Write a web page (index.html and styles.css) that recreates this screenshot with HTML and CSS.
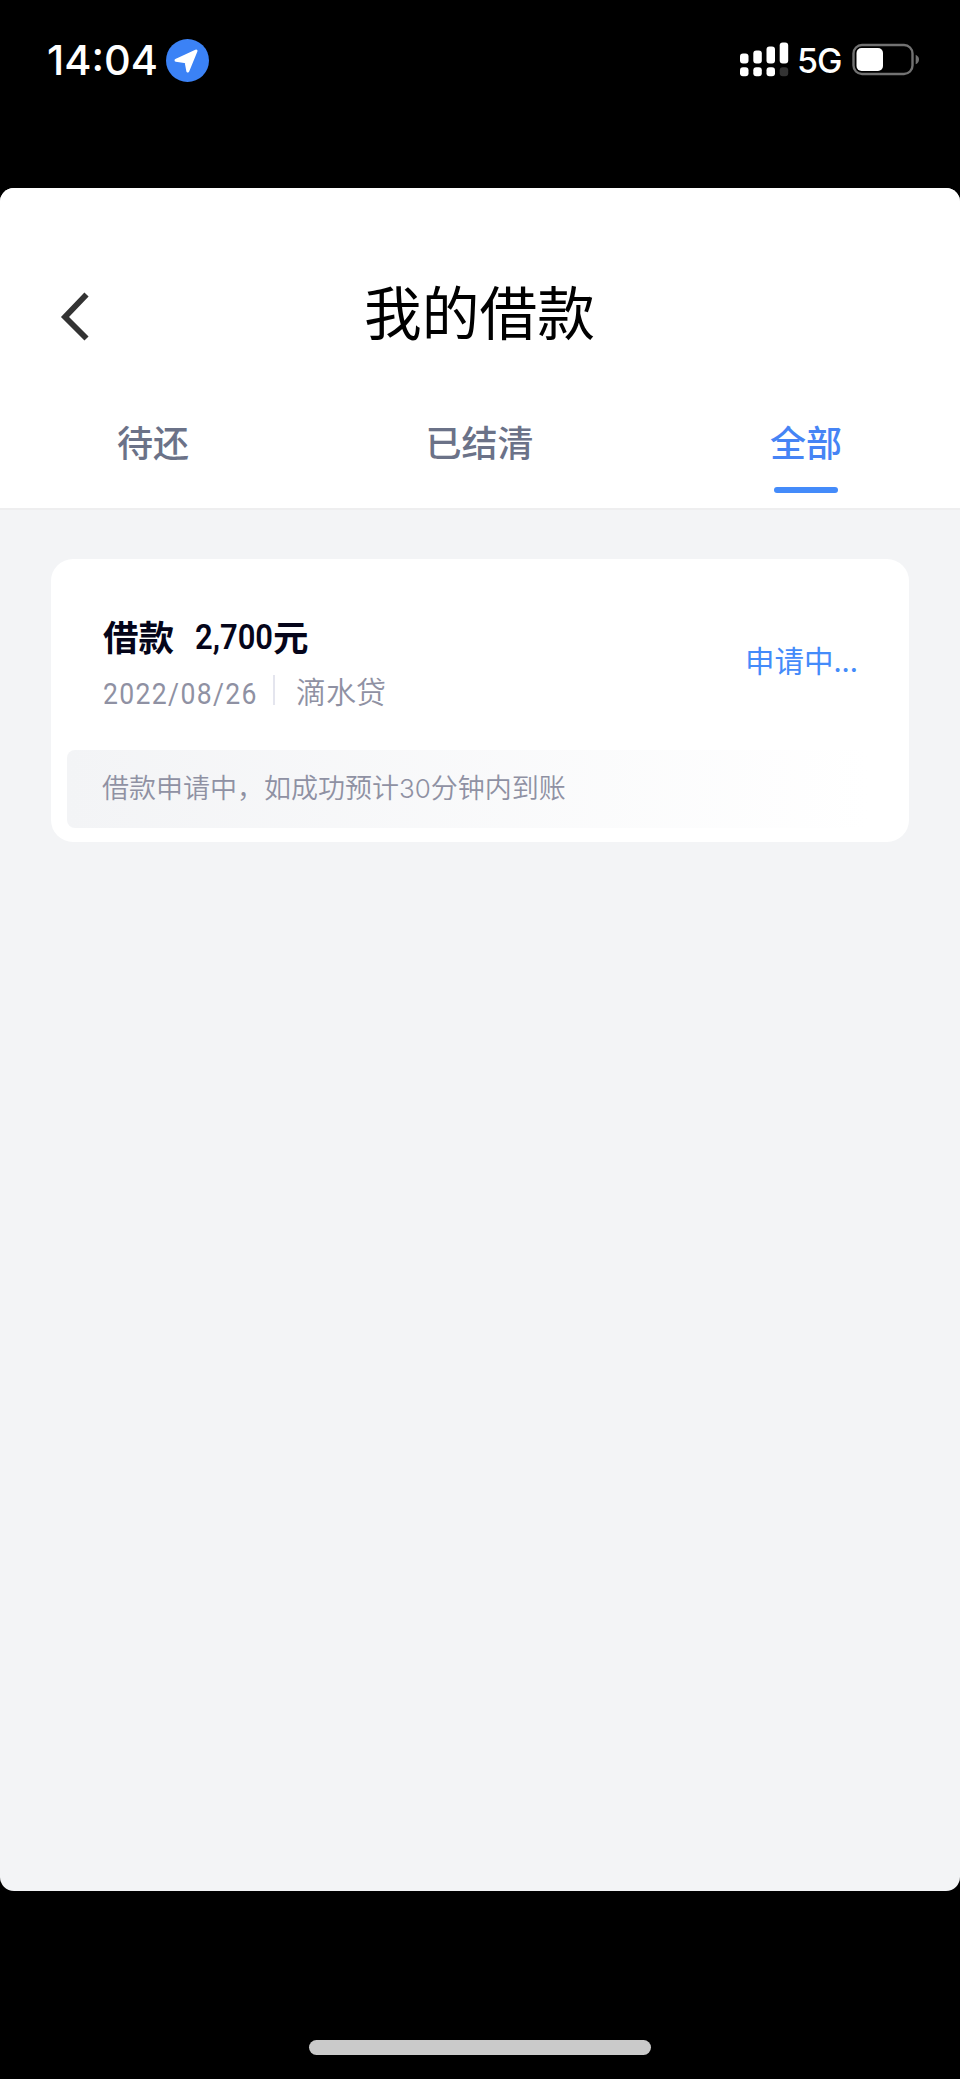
FILE: index.html
```html
<!DOCTYPE html>
<html lang="zh-CN">
<head>
<meta charset="utf-8">
<title>我的借款</title>
<link rel="stylesheet" href="styles.css">
</head>
<body>
<div class="status-bar">
  <span class="time">14:04</span>
  <svg class="location" width="44" height="44" viewBox="0 0 44 44"><circle cx="21.5" cy="22.5" r="21.5" fill="#3b82f6"/><path d="M10 22.3 L30 13 L21.8 33 L20.1 23.8 Z" fill="#fff" stroke="#fff" stroke-width="3" stroke-linejoin="round"/></svg>
  <svg class="signal" width="50" height="36" viewBox="0 0 50 36">
    <g fill="#fff"><rect x="1" y="11.5" width="8.5" height="10" rx="3"/><rect x="14.3" y="8.5" width="8.5" height="13" rx="3"/><rect x="27.5" y="4.5" width="8.5" height="17" rx="3"/><rect x="40.7" y="0.5" width="8.5" height="21" rx="3"/><rect x="1" y="25.3" width="8.5" height="9" rx="3"/><rect x="14.3" y="25.3" width="8.5" height="9" rx="3"/><rect x="27.5" y="25.3" width="8.5" height="9" rx="3"/></g>
    <rect x="40.7" y="25.3" width="8.5" height="9" rx="3" fill="#333"/>
  </svg>
  <span class="network">5G</span>
  <svg class="battery" width="68" height="34" viewBox="0 0 68 34"><rect x="1.5" y="2" width="59" height="29" rx="8.5" fill="none" stroke="#727272" stroke-width="2.4"/><rect x="4.5" y="5" width="26.5" height="23" rx="5" fill="#fff"/><path d="M63.7 11.7 Q67 13.3 67 16.5 Q67 19.7 63.7 21.3 Z" fill="#727272"/></svg>
</div>
<main class="sheet">
  <header class="header">
    <div class="title-row">
      <svg class="back" width="30" height="50" viewBox="0 0 30 50"><path d="M26.5 2.5 L5 25 L26.5 46.5" fill="none" stroke="#333" stroke-width="5.8"/></svg>
      <h1 class="title">我的借款</h1>
    </div>
    <nav class="tabs">
      <span class="tab">待还</span>
      <span class="tab">已结清</span>
      <span class="tab active">全部</span>
    </nav>
  </header>
  <section class="card">
    <div class="loan">
      <div class="info">
        <div class="loan-name"><span class="kind">借款</span><span class="amount">2,700</span><span>元</span></div>
        <div class="meta"><span class="date">2022/08/26</span><i class="divider"></i><span class="product">滴水贷</span></div>
      </div>
      <span class="state">申请中...</span>
    </div>
    <div class="notice">借款申请中，如成功预计<span class="minutes">30</span>分钟内到账</div>
  </section>
</main>
<footer class="home"><div class="home-bar"></div></footer>
</body>
</html>
```
FILE: styles.css
```css
* { box-sizing: border-box; }
body { margin: 0; width: 960px; height: 2079px; background: #000; overflow: hidden; display: flex; flex-direction: column; font-family: "Noto Sans CJK SC", sans-serif; }
svg { display: block; flex: none; }
.status-bar { height: 188px; padding: 38px 40px 0 47px; display: flex; align-items: flex-start; color: #fff; font-family: Inter, sans-serif; }
.time { width: 119px; font-size: 41.5px; line-height: 44px; font-weight: 500; white-space: nowrap; }
.signal { margin: 4px 8px 0 529px; }
.network { width: 55px; font-size: 34px; line-height: 45px; letter-spacing: -1px; font-weight: 450; }
.battery { margin-top: 5px; }
.sheet { height: 1703px; background: #f3f4f6; border-radius: 14px; overflow: hidden; }
.header { height: 322px; padding-top: 81px; background: #fff; border-bottom: 2px solid #eeeeef; }
.title-row { display: flex; align-items: flex-start; height: 84px; padding-left: 60px; }
.back { margin-top: 23px; }
.title { flex: 1; margin: 0 91px 0 0; text-align: center; font-size: 57.7px; line-height: 82px; font-weight: 400; color: #000; }
.tabs { display: flex; justify-content: space-between; margin-top: 61px; padding: 0 118px 0 117px; }
.tab { display: flex; flex-direction: column; align-items: center; font-size: 36px; line-height: 54px; font-weight: 500; color: #6b7288; }
.active { color: #4684f5; }
.active::after { content: ""; width: 64px; height: 6px; margin-top: 19px; border-radius: 3px; background: #448bfa; }
.card { margin: 49px 51px 0; height: 283px; padding: 50px 16px 0; border-radius: 22px; background: #fff; }
.loan { height: 141px; padding: 0 35px 0 36px; display: flex; justify-content: space-between; }
.loan-name { display: flex; align-items: center; height: 52px; font-size: 35.5px; font-weight: 700; color: #05051a; }
.kind { width: 71px; }
.amount { width: 78px; margin-left: 21px; padding-top: 4px; font-family: Roboto, sans-serif; font-size: 35px; font-weight: 600; transform: scaleX(.885); transform-origin: left; }
.meta { display: flex; align-items: center; height: 58px; font-size: 30px; font-weight: 350; color: #8f91a3; }
.date { width: 170px; padding-top: 8px; font-family: Roboto, sans-serif; font-size: 29.5px; font-weight: 400; transform: scaleX(.9); transform-origin: left; letter-spacing: 1.5px; }
.divider { width: 2px; height: 30px; background: #e4e5ee; margin-right: 21px; }
.state { flex: none; margin-top: 28px; font-size: 29.5px; line-height: 44px; white-space: nowrap; color: #448bfa; }
.notice { width: 801px; height: 78px; padding-left: 35px; border-radius: 8px; background: linear-gradient(90deg, #f3f4f6, #fff); font-size: 27px; line-height: 74px; font-weight: 350; color: #8f91a3; }
.minutes { font-family: Inter, "Liberation Sans", sans-serif; font-size: 26px; }
.home { flex: 1; padding-top: 149px; }
.home-bar { width: 342px; height: 15px; margin: 0 auto; border-radius: 8px; background: #cacaca; }
```
